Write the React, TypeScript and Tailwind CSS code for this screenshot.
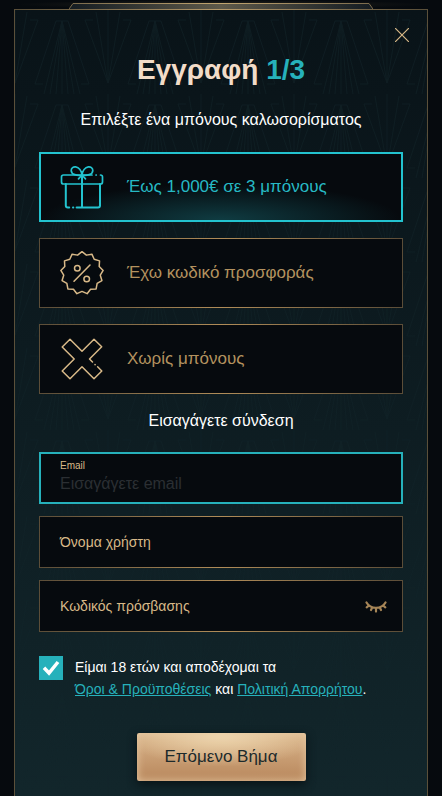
import { ReactNode, useState } from "react";
import clsx from "clsx";

type IconProps = { className?: string };

const GiftIcon = ({ className }: IconProps) => (
	<svg viewBox="0 0 44 46" className={className} fill="none" stroke="currentColor" strokeWidth="1.7" strokeLinecap="round" strokeLinejoin="round" aria-hidden="true">
		<path d="M32 11H3.5a2 2 0 0 0-2 2v5a2 2 0 0 0 2 2h37a2 2 0 0 0 2-2v-5a2 2 0 0 0-2-2M36 11h.3" />
		<path d="M5.800 20v21.600a2 2 0 0 0 2 2h1.400M13 43.600h.3M16.600 43.600h21.400a2 2 0 0 0 2-2V20M22 11v32.600" strokeWidth="2" />
		<path d="M22 11c-5 1.200-10.800-.6-10.800-4.600 0-2.400 2.200-3.800 4.400-3.500C19 3.400 21.500 7 22 11c.5-4 3-7.600 6.400-8.100 2.200-.3 4.400 1.100 4.400 3.500 0 4-5.800 5.800-10.800 4.600" />
		<path d="M22 11l-3.500 3.800M22 11l3.500 3.800" />
	</svg>
);

const BADGE_TIPS = 13;

const badgePath = () => {
	const at = (step: number, radius: number) => {
		const angle = (Math.PI * step) / BADGE_TIPS;
		return `${(22 + radius * Math.sin(angle)).toFixed(2)} ${(22 - radius * Math.cos(angle)).toFixed(2)}`;
	};
	let d = `M${at(0, 21.3)}`;
	for (let i = 0; i < BADGE_TIPS; i++) {
		d += `L${at(i * 2 + 1, 18.4)}L${at(i * 2 + 2, 21.3)}`;
	}
	return `${d}Z`;
};

const PercentIcon = ({ className }: IconProps) => (
	<svg viewBox="0 0 44 44" className={className} fill="none" stroke="currentColor" strokeWidth="1.5" strokeLinecap="round" strokeLinejoin="round" aria-hidden="true">
		<path d={badgePath()} />
		<circle cx="17.3" cy="17.3" r="2.8" />
		<circle cx="26.7" cy="28" r="2.8" />
		<path d="M30 14L14 30.300" />
	</svg>
);

const CrossIcon = ({ className }: IconProps) => (
	<svg viewBox="0 0 44 44" className={className} fill="none" stroke="currentColor" strokeWidth="1.5" strokeLinecap="round" strokeLinejoin="round" aria-hidden="true">
		<path d="M32.500 25L29.500 22l12.200-12.200L34 2.200 22 14.200 10 2.200 2.200 10l12 12-12 12L10 41.800l12-12 12 12 7.800-7.800-4.200-4.200M35 27.500l.1.1" />
	</svg>
);

const ClosedEyeIcon = ({ className }: IconProps) => (
	<svg viewBox="0 0 22 12" className={className} fill="none" stroke="currentColor" strokeWidth="2.200" strokeLinecap="round" aria-hidden="true">
		<path d="M1.500 1.500C5.500 8.500 16.500 8.500 20.500 1.500M4 4.500L1.700 6.300M7.200 6.500L6 9M11 7.400v3.200M14.800 6.500L16 9M18 4.500l2.300 1.800" />
	</svg>
);

const DecoPattern = () => (
	<svg className="pointer-events-none absolute inset-0 size-full" aria-hidden="true">
		<defs>
			<pattern id="deco" width="93" height="84" patternUnits="userSpaceOnUse" fill="none">
				<g stroke="#1b3338" strokeWidth="1">
					<path d="M41 11h12M47 11L29 84M47 11L35 84M47 11L41 84M47 11v73M47 11L53 84M47 11L59 84M47 11L65 84" />
					<path d="M41 11L20 74h8M53 11L74 74h-8" />
					<path d="M0 73V0M0 73L12 2M0 73L23 10h-8M93 73V0M93 73L81 2M93 73L70 10h8" />
				</g>
			</pattern>
			<linearGradient id="decoFade" x1="0" y1="0" x2="0" y2="1">
				<stop offset="0" stopColor="#fff" stopOpacity=".32" />
				<stop offset="1" stopColor="#fff" stopOpacity=".05" />
			</linearGradient>
			<mask id="decoMask">
				<rect width="100%" height="100%" fill="url(#decoFade)" />
			</mask>
		</defs>
		<rect width="100%" height="100%" fill="url(#deco)" mask="url(#decoMask)" />
	</svg>
);

const goldBorder = "border [border-image:linear-gradient(90deg,#5b4d38,#b08c58_50%,#5b4d38)_1]";

const bonuses = [
	{ id: "welcome", label: "Έως 1,000€ σε 3 μπόνους", Icon: GiftIcon },
	{ id: "code", label: "Έχω κωδικό προσφοράς", Icon: PercentIcon },
	{ id: "none", label: "Χωρίς μπόνους", Icon: CrossIcon },
];

type FieldProps = { id: string; label: string; type: string; children?: ReactNode };

const Field = ({ id, label, type, children }: FieldProps) => (
	<div className={clsx("flex h-13 items-center bg-[#060a0e] pl-5 pr-[15px]", goldBorder)}>
		<label htmlFor={id} className="text-sm text-[#d8b988]">{label}</label>
		<input id={id} type={type} className="h-full min-w-0 flex-1 bg-transparent px-2 text-base text-white outline-none" />
		{children}
	</div>
);

const App = () => {

	const [bonus, setBonus] = useState("welcome");
	const [accepted, setAccepted] = useState(true);
	const [showPassword, setShowPassword] = useState(false);

	return (
		<div className="flex min-h-screen flex-col bg-[#060a0e] px-3.5 font-['Liberation_Sans',Arial,sans-serif] text-white">

			<div className="flex h-[9px] items-end justify-center bg-[radial-gradient(closest-side,#24231d,#060a0e)]">
				<svg viewBox="0 0 304 6" className="h-1.5 w-[304px]" aria-hidden="true">
					<defs>
						<linearGradient id="plate">
							<stop offset="0" stopColor="#141c22" />
							<stop offset=".5" stopColor="#5e594a" />
							<stop offset="1" stopColor="#141c22" />
						</linearGradient>
						<linearGradient id="plateEdge">
							<stop offset="0" stopColor="#7a6a4c" />
							<stop offset=".5" stopColor="#c2a56f" />
							<stop offset="1" stopColor="#7a6a4c" />
						</linearGradient>
					</defs>
					<path d="M0 6L4 .5h296l4 5.500" fill="url(#plate)" stroke="url(#plateEdge)" />
				</svg>
			</div>

			<main className="relative flex flex-1 flex-col border border-b-0 bg-linear-to-b from-[#091318] to-[#12262b] px-6 pb-[15px] pt-[18px] [border-image:radial-gradient(circle_at_50%_0,#b6996a,#5b503a_200px)_1]">
				<DecoPattern />

				<form className="relative flex flex-col" onSubmit={(e) => e.preventDefault()}>
					<button type="button" aria-label="Κλείσιμο" className="-mr-1.5 self-end text-[#d8b988]">
						<svg viewBox="0 0 14 14" className="size-3.5" stroke="currentColor" strokeWidth="1.200" aria-hidden="true">
							<path d="M0 0L14 14M14 0L0 14" />
						</svg>
					</button>

					<h1 className="mt-2.5 text-center text-[28px] font-bold leading-9 text-[#f2dcc8]">
						Εγγραφή <span className="text-[#26b1bb]">1/3</span>
					</h1>

					<fieldset className="mt-5">
						<legend className="w-full text-center text-base">Επιλέξτε ένα μπόνους καλωσορίσματος</legend>
						<div className="mt-5 flex flex-col gap-4">
							{bonuses.map(({ id, label, Icon }) => (
								<label
									key={id}
									className={clsx(
										"flex h-[70px] cursor-pointer items-center gap-[23px]",
										id === bonus
											? "border-2 border-[#23c3cf] bg-[#060a0e] bg-[radial-gradient(ellipse_50%_55%_at_50%_100%,#0f3c42,transparent)] px-[19px] text-[#26b9c4]"
											: ["bg-[#060a0e] px-5 text-[#b3925f]", goldBorder]
									)}
								>
									<input type="radio" name="bonus" value={id} checked={id === bonus} onChange={() => setBonus(id)} className="sr-only" />
									<Icon className={clsx("w-11 shrink-0", id === bonus ? "text-[#23c3cf]" : "text-[#d8b988]")} />
									<span className="text-[17px]">{label}</span>
								</label>
							))}
						</div>
					</fieldset>

					<h2 className="mt-[15px] text-center text-base">Εισαγάγετε σύνδεση</h2>

					<div className="mt-[19px] flex flex-col gap-3">
						<div className="flex h-13 flex-col border-2 border-[#26b1bb] bg-[#060a0e] px-[19px] pt-1.5">
							<label htmlFor="email" className="text-[10px] leading-3 text-[#d8b988]">Email</label>
							<input
								id="email"
								type="email"
								placeholder="Εισαγάγετε email"
								className="h-6 w-full bg-transparent text-base text-white outline-none placeholder:text-[#2b2f33]"
							/>
						</div>
						<Field id="username" label="Όνομα χρήστη" type="text" />
						<Field id="password" label="Κωδικός πρόσβασης" type={showPassword ? "text" : "password"}>
							<button type="button" aria-label="Εμφάνιση κωδικού" className="text-[#a58557]" onClick={() => setShowPassword(!showPassword)}>
								<ClosedEyeIcon className="mt-0.5 h-3 w-5.5" />
							</button>
						</Field>
					</div>

					<div className="mt-6 flex gap-3">
						<div className="relative size-6 shrink-0">
							<input
								id="terms"
								type="checkbox"
								checked={accepted}
								onChange={(e) => setAccepted(e.target.checked)}
								className="block size-6 appearance-none border border-[#26b1bb] bg-[#060a0e] checked:bg-[#26b1bb]"
							/>
							{accepted && (
								<svg viewBox="0 0 24 24" className="pointer-events-none absolute inset-0" fill="none" stroke="#fff" strokeWidth="3.500" aria-hidden="true">
									<path d="M5 11.800L10 17 19 6" />
								</svg>
							)}
						</div>
						<label htmlFor="terms" className="text-sm leading-[22px]">
							Είμαι 18 ετών και αποδέχομαι τα<br />
							<a href="#terms" className="text-[#26b1bb] underline">Όροι &amp; Προϋποθέσεις</a> και <a href="#privacy" className="text-[#26b1bb] underline">Πολιτική Απορρήτου</a>.
						</label>
					</div>

					<button
						type="submit"
						className="mt-[33px] h-12 self-center rounded-xs bg-[radial-gradient(ellipse_60%_70%_at_50%_0,#f0dab2,transparent),linear-gradient(#d9b48a,#b8875c)] px-7 text-[17px] text-[#1c2a2b] shadow-[inset_0_0_8px_#e6c8a2,0_3px_10px_#081215]"
					>
						Επόμενο Βήμα
					</button>
				</form>
			</main>
		</div>
	);
};

export default App;
